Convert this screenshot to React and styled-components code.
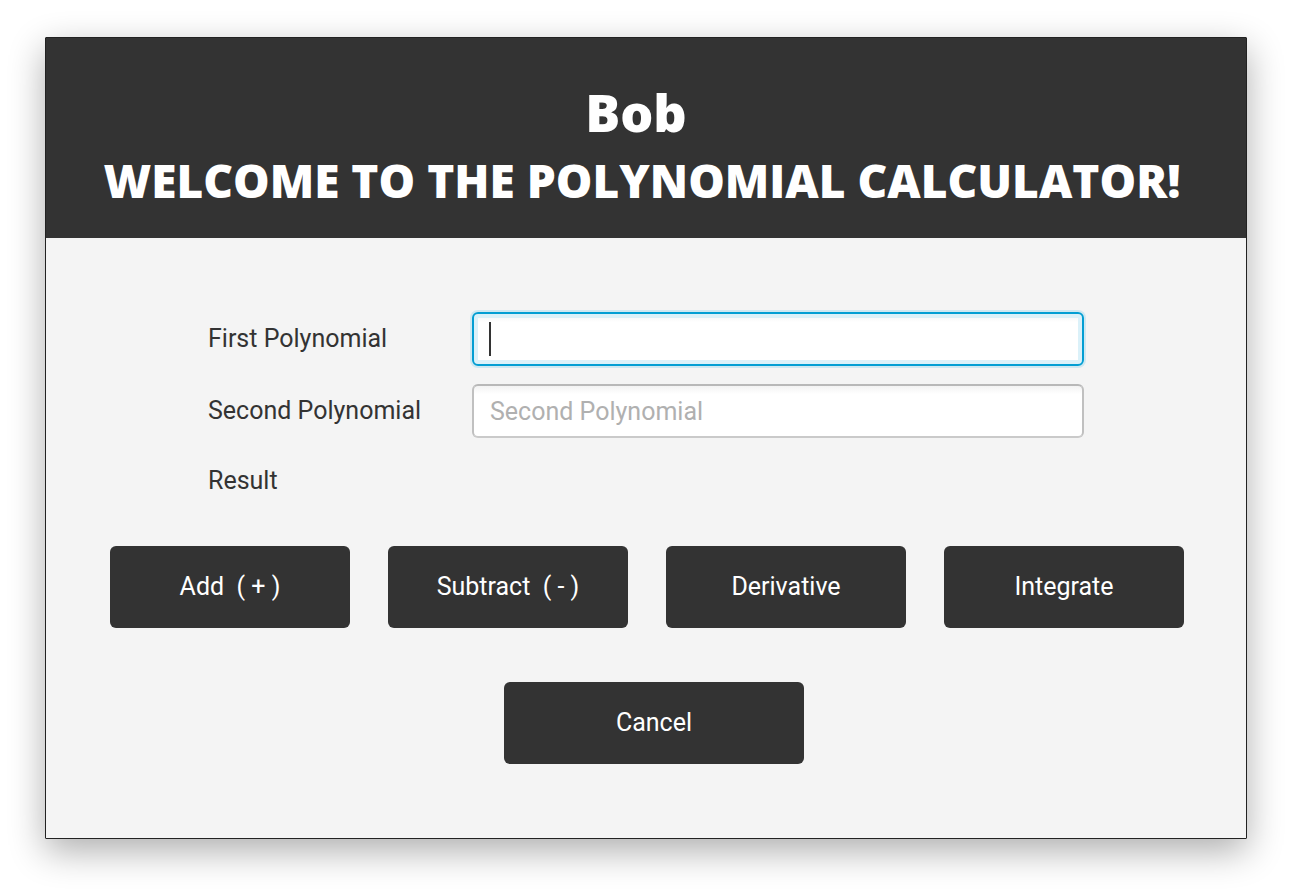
import React from 'react';
import styled, { createGlobalStyle } from 'styled-components';

const GlobalStyle = createGlobalStyle`
  *, *::before, *::after { box-sizing: border-box; }
  body {
    margin: 0;
    background: #fff;
    color: #333;
    font-family: Roboto, Inter, sans-serif;
    font-size: 25px;
  }
`;

const Page = styled.main`
  min-height: 100vh;
  padding: 37px 45px 53px;
  display: flex;
`;

const Window = styled.form`
  flex: 1;
  display: flex;
  flex-direction: column;
  background: #f4f4f4;
  border: 1px solid #222;
  border-radius: 1px;
  box-shadow: 0 12px 36px rgba(0, 0, 0, 0.32);
`;

const Header = styled.header`
  background: #333;
  color: #fff;
  padding: 40px 0 24px;
  text-align: center;
  font-family: "Open Sans", sans-serif;
  font-weight: 800;
  line-height: 68px;
`;

const Name = styled.p`
  margin: 0;
  padding-right: 20px;
  font-size: 52px;
`;

const Title = styled.h1`
  margin: 0;
  padding-right: 8px;
  font-size: 46px;
  font-weight: inherit;
  white-space: nowrap;
`;

const Fields = styled.div`
  width: 876px;
  max-width: 100%;
  margin: 74px auto 0;
  display: grid;
  grid-template-columns: 264px 1fr;
  row-gap: 18px;
  align-items: center;
`;

const Label = styled.label`
  line-height: 50px;
`;

const InputBox = styled.div`
  position: relative;
  display: flex;
`;

const Caret = styled.span`
  display: none;
  position: absolute;
  left: 17px;
  top: 10px;
  width: 2px;
  height: 34px;
  background: #333;
  pointer-events: none;
`;

const Input = styled.input`
  width: 100%;
  height: 54px;
  padding: 0 16px;
  border: 2px solid;
  border-color: #b8b8b8 #c0c0c0 #cacaca;
  border-radius: 6px;
  background: linear-gradient(#f3f3f3, #fff 8px);
  color: #333;
  font: inherit;
  outline: none;

  &::placeholder { color: #b0b0b0; opacity: 1; }

  &:focus {
    border-color: #039ed3;
    box-shadow: 0 0 0 2px #cfe8f1, inset 0 0 0 4px #dbf1f9;
  }

  &:focus:placeholder-shown { caret-color: transparent; }
  &:focus:placeholder-shown + ${Caret} { display: block; }
`;

const Actions = styled.div`
  display: flex;
  justify-content: center;
  gap: 38px;
  padding-left: 2px;
  margin-top: 40px;
`;

const Footer = styled(Actions)`
  padding-left: 16px;
  margin-top: 54px;
`;

const Button = styled.button`
  width: ${(p) => (p.$wide ? 300 : 240)}px;
  height: 82px;
  padding: 0 0 2px;
  border: 0;
  border-radius: 6px;
  background: #333;
  color: #fff;
  font: inherit;
  white-space: pre;
`;

export default function App() {
  return (
    <>
      <GlobalStyle />
      <Page>
        <Window onSubmit={(e) => e.preventDefault()}>
          <Header>
            <Name>Bob</Name>
            <Title>WELCOME TO THE POLYNOMIAL CALCULATOR!</Title>
          </Header>
          <Fields>
            <Label htmlFor="first">First Polynomial</Label>
            <InputBox>
              <Input id="first" placeholder=" " autoFocus />
              <Caret />
            </InputBox>
            <Label htmlFor="second">Second Polynomial</Label>
            <InputBox>
              <Input id="second" placeholder="Second Polynomial" />
            </InputBox>
            <Label htmlFor="result">Result</Label>
            <output id="result" />
          </Fields>
          <Actions>
            <Button type="button">Add  ( + )</Button>
            <Button type="button">Subtract  ( - )</Button>
            <Button type="button">Derivative</Button>
            <Button type="button">Integrate</Button>
          </Actions>
          <Footer>
            <Button type="button" $wide>Cancel</Button>
          </Footer>
        </Window>
      </Page>
    </>
  );
}
